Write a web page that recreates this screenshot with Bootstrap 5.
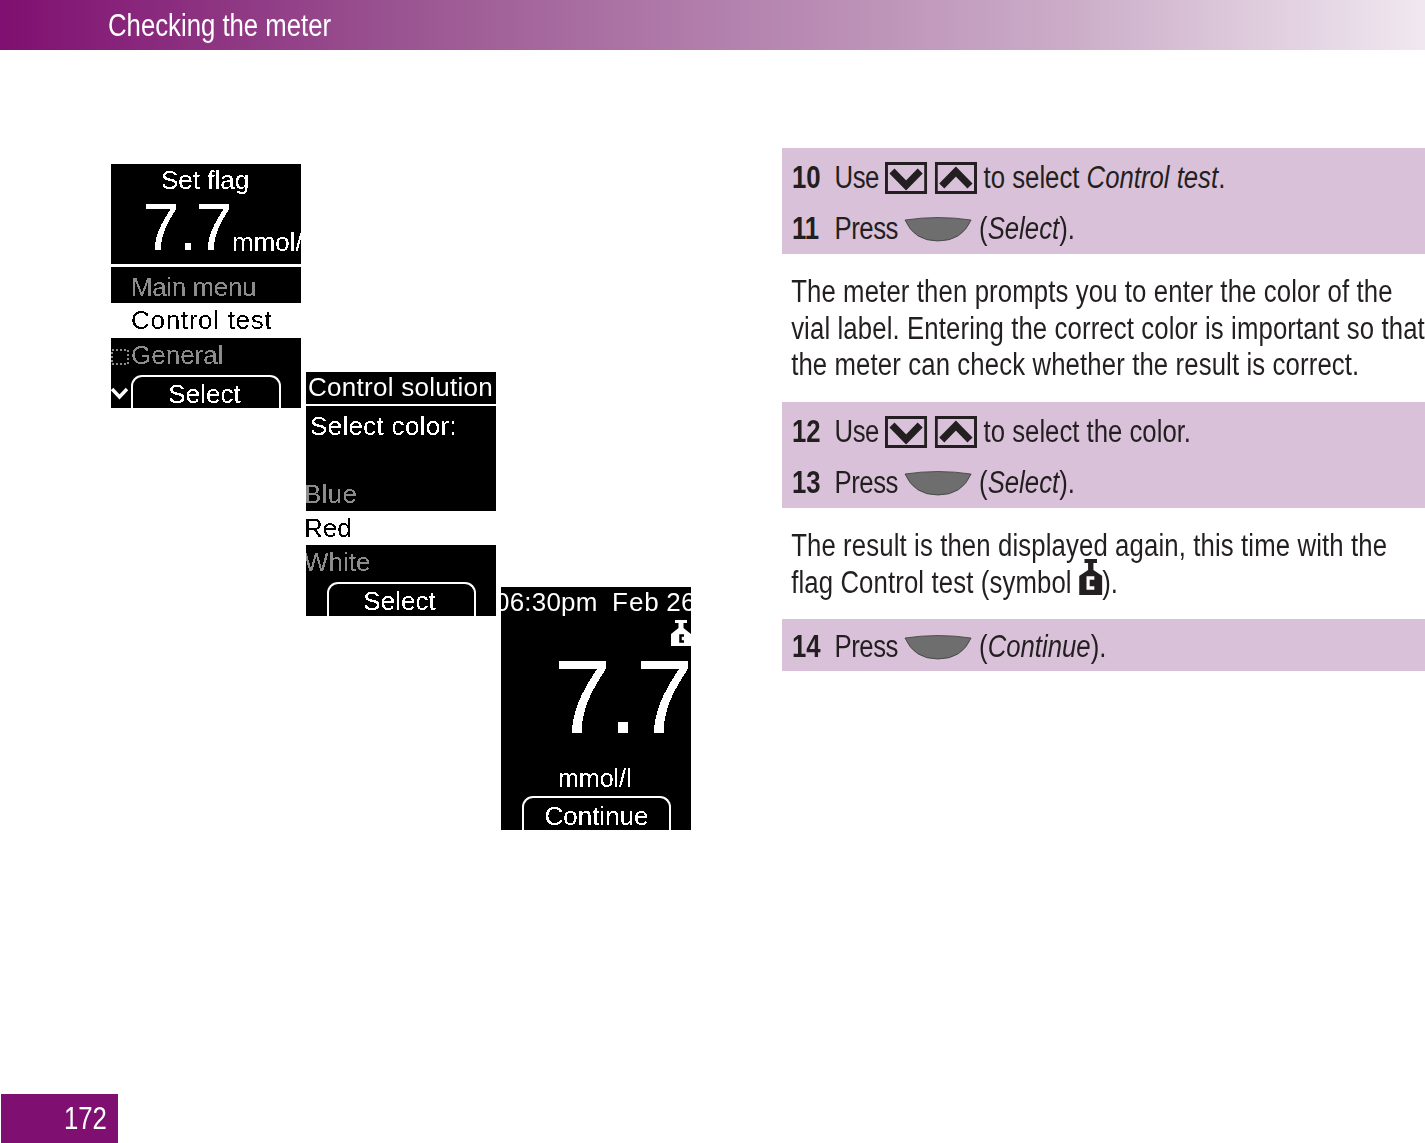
<!DOCTYPE html>
<html lang="en">
<head>
<meta charset="utf-8">
<title>Checking the meter</title>
<link rel="stylesheet" href="https://cdn.jsdelivr.net/npm/bootstrap@5.3.0/dist/css/bootstrap.min.css">
<style>
html,body{margin:0;background:#fff}
.sheet{width:1425px;height:1143px;overflow:hidden;font-family:"Liberation Sans",sans-serif;color:#231f20;font-size:31px}
.topbar{height:50px;padding-left:108px;line-height:52px;color:#fff;font-size:31px;background:linear-gradient(90deg,#7f0f70 0%,#9a5491 28%,#b27fac 50%,#cbacc8 75%,#f0e8f0 100%)}
.squeeze{display:inline-block;transform:scaleX(.83);transform-origin:0 50%;white-space:nowrap}
.stage{height:1044px}
.screens{width:782px;padding-left:111px;gap:5px}
.lcd{width:190px;font-size:26px;color:#fff;background:#fff}
.lcd1{margin-top:114px}.lcd2{margin-top:322px}.lcd3{margin-top:537px;background:#000;height:243px;overflow:hidden}
.band{background:#000;overflow:hidden;white-space:nowrap}
.pix{filter:url(#lcdedge)}
.dim{color:#8c8c8c}
.inv{background:#fff;color:#000}
.b-flagtop{height:100px;margin-bottom:3px}
.t-flag{height:36px;line-height:32px;padding-left:50px}
.v-small{padding-left:32px;margin-top:-6px;align-items:flex-end}
.n-small{font-size:66px;line-height:66px;flex:0 0 89px;letter-spacing:-1px}
.u-small{font-size:26px;line-height:35px;flex:0 0 auto}
.b-menu{height:36px;line-height:40px;padding-left:20px;letter-spacing:-.4px}
.r-ctrl{height:35px;line-height:35px;padding-left:20px;letter-spacing:.7px}
.b-soft{height:70px}
.r-general{height:37px;line-height:34px;gap:2px}
.softrow{height:33px}
.chev{width:20px;flex:0 0 20px}
.chev svg{display:block;margin-top:12px}
.softkey{width:150px;height:33px;border:2px solid #fff;border-bottom:0;border-radius:11px 11px 0 0;text-align:center;line-height:35px}
.softrow .softkey span{margin-left:-3px}
.b-title{height:32px;line-height:30px;padding-left:2px;margin-bottom:2px;letter-spacing:.27px}
.b-select{height:105px;padding:3px 0 0 4px;line-height:34px;letter-spacing:.3px}
.blue{margin:34px 0 0 -6px}
.r-red{height:34px;line-height:34px}
.r-red span{margin-left:-2px}
.b-white{height:71px}
.r-white{height:37px;line-height:34px;margin-left:-2px}
.softrow2{height:34px;padding-left:21px}
.softrow2 .softkey{width:149px;height:34px;line-height:34px}
.softrow2 .softkey span{margin-left:-4px}
.t-time{height:33px;line-height:30px;margin-left:-6px;word-spacing:4px;letter-spacing:.2px}
.feb{letter-spacing:1px;margin:0 -5px 0 3px}
.r-bottle{height:28px}
.n-big{font-size:103px;line-height:103px;height:115px;margin-top:-2px;letter-spacing:-2px}
.r-unit{height:35px;line-height:35px;padding-left:57px;font-size:25px}
.softrow3{height:34px;padding-left:21px}
.softrow3 .softkey{width:149px;height:34px;line-height:37px}
.steps{width:775px;margin-top:98px;transform:scaleX(.83);transform-origin:0 0}
.stepbox{background:#d9c2d9;padding:6px 0 1px 12px}
.onebox{padding:4px 0 0 12px}
.steprow{height:48px;gap:8.400px;white-space:nowrap}
.steprow+.steprow{margin-top:3px}
.num{font-weight:700;width:43px;flex:0 0 43px}
.lbl{letter-spacing:-.6px}
.note{padding:20px 0 18px 11px;line-height:36.700px;white-space:nowrap;letter-spacing:.15px}
.note2{padding:20px 0 17.600px 11px}
.keyico{width:51px;height:32px;flex:0 0 51px}
.keyfirst{margin-left:-1px}
.softico{width:82px;height:27px;flex:0 0 82px;margin-left:-1px}
.inlineico{width:28px;height:36px;vertical-align:-2px;margin:-22px 0 0}
.pageno{width:117px;height:49px;margin-left:1px;background:#7f0f70;color:#fff;padding-left:63px;line-height:49px;font-size:31px}
</style>
</head>
<body>
<svg width="0" height="0" class="position-absolute" aria-hidden="true"><defs>
<filter id="lcdedge" x="0" y="0" width="100%" height="100%"><feComponentTransfer><feFuncA type="discrete" tableValues="0 1"/></feComponentTransfer></filter>
<symbol id="kdown" viewBox="0 0 42 32" preserveAspectRatio="none"><rect x="1.500" y="1.500" width="39" height="29" fill="none" stroke="#231f20" stroke-width="3"/><path d="M7 9 21 23.500 35 9" fill="none" stroke="#231f20" stroke-width="7"/></symbol>
<symbol id="kup" viewBox="0 0 42 32" preserveAspectRatio="none"><rect x="1.500" y="1.500" width="39" height="29" fill="none" stroke="#231f20" stroke-width="3"/><path d="M7 24 21 9.500 35 24" fill="none" stroke="#231f20" stroke-width="7"/></symbol>
<symbol id="ksoft" viewBox="0 0 68 27" preserveAspectRatio="none"><path d="M1 4Q34-1 67 4 58 25 34 25 10 25 1 4Z" fill="#6e6e6e" stroke="#3c3c3c" stroke-width=".8"/></symbol>
</defs></svg>

<div class="sheet d-flex flex-column">
  <div class="topbar flex-shrink-0"><span class="squeeze">Checking the meter</span></div>

  <div class="stage d-flex align-items-start flex-shrink-0">
    <div class="screens d-flex align-items-start flex-shrink-0">

      <div class="lcd lcd1">
        <div class="band b-flagtop">
          <div class="t-flag pix">Set flag</div>
          <div class="v-small d-flex pix"><span class="n-small">7.7</span><span class="u-small">mmol/l</span></div>
        </div>
        <div class="band b-menu dim"><span class="d-inline-block pix">Main menu</span></div>
        <div class="r-ctrl inv"><span class="d-inline-block pix">Control test</span></div>
        <div class="band b-soft">
          <div class="r-general d-flex dim">
            <svg width="18" height="16" viewBox="0 0 18 16" class="align-self-center"><rect x="1" y="1" width="16" height="14" fill="none" stroke="#8c8c8c" stroke-width="2" stroke-dasharray="2 2"/></svg>
            <span class="pix">General</span>
          </div>
          <div class="softrow d-flex">
            <div class="chev"><svg width="17" height="13" viewBox="0 0 17 13"><path d="M1 2 8.500 10 16 2" fill="none" stroke="#fff" stroke-width="3.500"/></svg></div>
            <div class="softkey"><span class="pix d-inline-block">Select</span></div>
          </div>
        </div>
      </div>

      <div class="lcd lcd2">
        <div class="band b-title pix">Control solution</div>
        <div class="band b-select">
          <div class="pix">Select color:</div>
          <div class="blue dim pix">Blue</div>
        </div>
        <div class="r-red inv"><span class="d-inline-block pix">Red</span></div>
        <div class="band b-white">
          <div class="r-white dim pix">White</div>
          <div class="softrow2"><div class="softkey"><span class="pix d-inline-block">Select</span></div></div>
        </div>
      </div>

      <div class="lcd lcd3">
        <div class="t-time band pix">06:30pm&nbsp;<span class="feb">Feb</span> 26</div>
        <div class="r-bottle d-flex justify-content-end">
          <svg width="20" height="26" viewBox="0 0 20 26"><path d="M4 0H16V3H12.500V8L20 14V26H0V14L7.500 8V3H4Z" fill="#fff"/><path d="M13 15.500H9.500V21.500H13" fill="none" stroke="#000" stroke-width="2.500"/></svg>
        </div>
        <div class="n-big text-end pix">7.7</div>
        <div class="r-unit pix">mmol/l</div>
        <div class="softrow3"><div class="softkey"><span class="pix d-inline-block">Continue</span></div></div>
      </div>
    </div>

    <div class="steps flex-shrink-0">
      <div class="stepbox">
        <div class="steprow d-flex align-items-center"><span class="num">10</span><span class="lbl">Use</span><svg class="keyico keyfirst"><use href="#kdown"/></svg><svg class="keyico"><use href="#kup"/></svg><span>to select <i>Control test</i>.</span></div>
        <div class="steprow d-flex align-items-center"><span class="num">11</span><span class="lbl">Press</span><svg class="softico"><use href="#ksoft"/></svg><span>(<i>Select</i>).</span></div>
      </div>
      <p class="note mb-0">The meter then prompts you to enter the color of the<br>vial label. Entering the correct color is important so that<br>the meter can check whether the result is correct.</p>
      <div class="stepbox">
        <div class="steprow d-flex align-items-center"><span class="num">12</span><span class="lbl">Use</span><svg class="keyico keyfirst"><use href="#kdown"/></svg><svg class="keyico"><use href="#kup"/></svg><span>to select the color.</span></div>
        <div class="steprow d-flex align-items-center"><span class="num">13</span><span class="lbl">Press</span><svg class="softico"><use href="#ksoft"/></svg><span>(<i>Select</i>).</span></div>
      </div>
      <p class="note note2 mb-0">The result is then displayed again, this time with the<br>flag Control test (symbol <svg class="inlineico" viewBox="0 0 26 36" preserveAspectRatio="none"><path d="M6 0H20V4H16V11L26 17V36H0V17L10 11V4H6Z" fill="#231f20"/><path d="M17 19H10V29H17" fill="none" stroke="#fff" stroke-width="3.500"/></svg>).</p>
      <div class="stepbox onebox">
        <div class="steprow d-flex align-items-center"><span class="num">14</span><span class="lbl">Press</span><svg class="softico"><use href="#ksoft"/></svg><span>(<i>Continue</i>).</span></div>
      </div>
    </div>
  </div>

  <div class="pageno flex-shrink-0"><span class="squeeze">172</span></div>
</div>
<script src="https://cdn.jsdelivr.net/npm/bootstrap@5.3.0/dist/js/bootstrap.bundle.min.js"></script>
</body>
</html>
